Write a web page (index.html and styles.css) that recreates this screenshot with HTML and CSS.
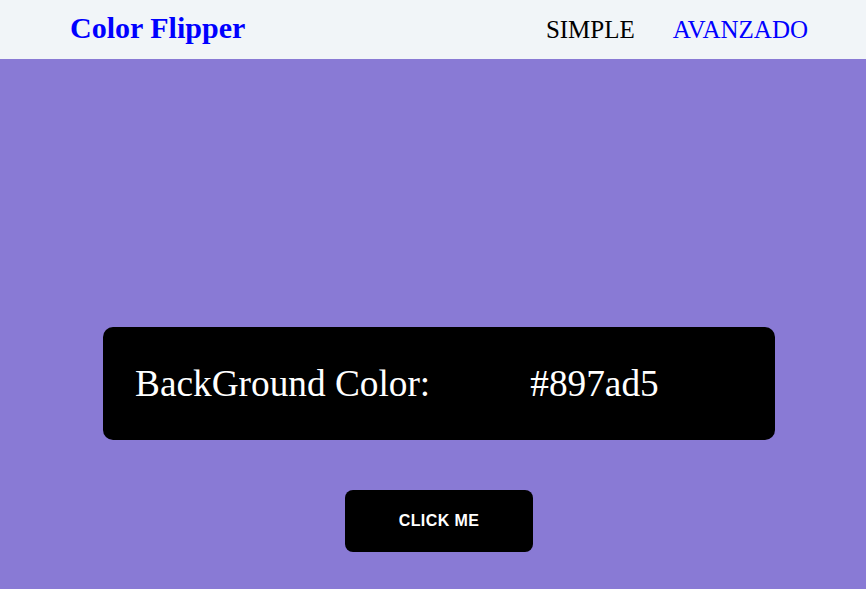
FILE: index.html
```html
<!DOCTYPE html>
<html lang="es">
<head>
<meta charset="utf-8">
<title>Color Flipper</title>
<link rel="stylesheet" href="styles.css">
</head>
<body>
<nav class="nav">
  <div class="nav-center">
    <h4 class="logo">Color Flipper</h4>
    <ul class="nav-links">
      <li><a class="link simple" href="#">SIMPLE</a></li>
      <li><a class="link hex" href="#">AVANZADO</a></li>
    </ul>
  </div>
</nav>
<main class="main">
  <div class="container">
    <h2 class="color-line">BackGround Color: <span class="color">#897ad5</span></h2>
    <button class="btn" type="button">CLICK ME</button>
  </div>
</main>
</body>
</html>
```
FILE: styles.css
```css
* { margin: 0; padding: 0; box-sizing: border-box; }
html, body { height: 100%; }
body {
  font-family: "Liberation Serif", "Times New Roman", serif;
  background: #897ad5;
  overflow: hidden;
}
.nav {
  background: #f1f5f8;
  height: 59px;
}
.nav-center {
  height: 100%;
  display: flex;
  align-items: center;
  justify-content: space-between;
  padding: 0 58px 0 70px;
}
.logo {
  font-size: 30px;
  font-weight: bold;
  color: #0000ff;
  margin-top: -3px;
}
.nav-links {
  list-style: none;
  display: flex;
  gap: 38px;
}
.link {
  font-size: 25px;
  text-decoration: none;
}
.simple { color: #000; }
.hex { color: #0000ff; }
.main {
  padding-top: 268px;
  padding-left: 12px;
}
.container {
  display: flex;
  flex-direction: column;
  align-items: center;
}
.color-line {
  width: 672px;
  height: 113px;
  background: #000;
  color: #fff;
  border-radius: 10px;
  font-weight: normal;
  font-size: 37.3px;
  display: flex;
  align-items: center;
  padding-left: 32px;
}
.color { margin-left: 100px; }
.btn {
  margin-top: 50px;
  width: 188px;
  height: 62px;
  background: #000;
  color: #fff;
  border: none;
  border-radius: 8px;
  font-family: "Liberation Sans", Arial, sans-serif;
  font-weight: bold;
  font-size: 16px;
  letter-spacing: 0.4px;
}
```
